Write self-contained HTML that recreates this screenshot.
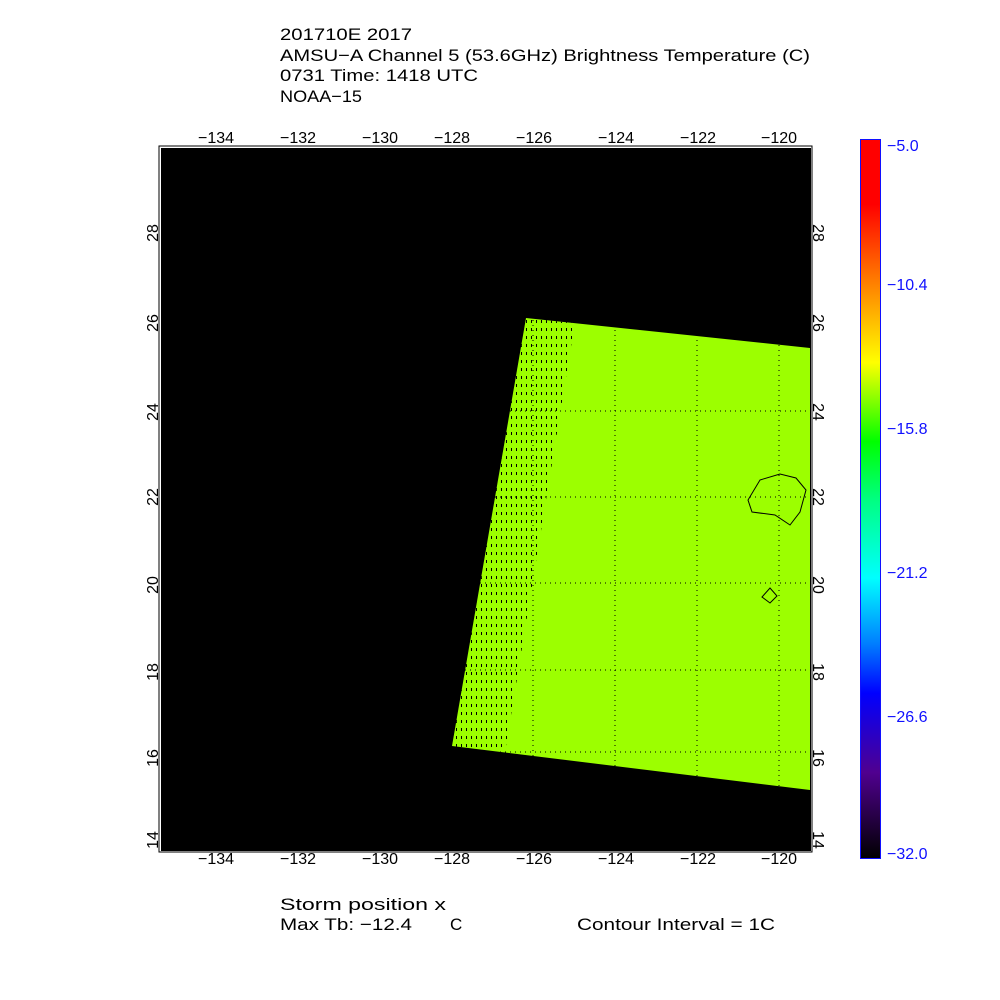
<!DOCTYPE html>
<html><head><style>body{margin:0;background:#fff}svg{display:block}</style></head>
<body>
<svg width="1000" height="1000" viewBox="0 0 1000 1000" font-family="Liberation Sans, sans-serif">
<defs>
<linearGradient id="cb" x1="0" y1="0" x2="0" y2="1">
<stop offset="0" stop-color="#ff0000"/>
<stop offset="0.09" stop-color="#ff0000"/>
<stop offset="0.20" stop-color="#ff8000"/>
<stop offset="0.31" stop-color="#ffff00"/>
<stop offset="0.42" stop-color="#00ff00"/>
<stop offset="0.50" stop-color="#00ff80"/>
<stop offset="0.61" stop-color="#00ffff"/>
<stop offset="0.70" stop-color="#0080ff"/>
<stop offset="0.77" stop-color="#0000ff"/>
<stop offset="0.88" stop-color="#500090"/>
<stop offset="1" stop-color="#000000"/>
</linearGradient>
<clipPath id="sw"><polygon points="526,318 810,348 810,790 452,746"/></clipPath>
<pattern id="hat" width="5" height="8" patternUnits="userSpaceOnUse"><rect x="1" y="0" width="1" height="3" fill="#000"/></pattern>
</defs>
<g font-size="17" fill="#000">
<text x="280" y="40" textLength="132" lengthAdjust="spacingAndGlyphs">201710E 2017</text>
<text x="280" y="61" textLength="530" lengthAdjust="spacingAndGlyphs">AMSU−A Channel 5 (53.6GHz) Brightness Temperature (C)</text>
<text x="280" y="81" textLength="198" lengthAdjust="spacingAndGlyphs">0731 Time: 1418 UTC</text>
<text x="280" y="102" textLength="82" lengthAdjust="spacingAndGlyphs">NOAA−15</text>
</g>
<rect x="159" y="146" width="653" height="706" fill="#fff" stroke="#000" stroke-width="1"/>
<rect x="161" y="148" width="650" height="703" fill="#000"/>
<polygon points="526,318 810,348 810,790 452,746" fill="#9cff00"/>
<g clip-path="url(#sw)">
<polygon points="526,318 575,322 505,752 452,746" fill="url(#hat)"/>
<g stroke="#000" stroke-width="1" stroke-dasharray="1,4">
<line x1="533" y1="300" x2="533" y2="800"/><line x1="615" y1="300" x2="615" y2="800"/>
<line x1="697" y1="300" x2="697" y2="800"/><line x1="779" y1="300" x2="779" y2="800"/>
<line x1="440" y1="411" x2="810" y2="411"/><line x1="440" y1="497" x2="810" y2="497"/>
<line x1="440" y1="583" x2="810" y2="583"/><line x1="440" y1="670" x2="810" y2="670"/>
<line x1="440" y1="752" x2="810" y2="752"/>
</g>
</g>
<path d="M760,480 L780,474 L796,478 L806,490 L800,512 L790,525 L775,515 L752,512 L748,500 Z" fill="none" stroke="#000"/>
<path d="M762,597 L770,588 L777,596 L770,603 Z" fill="none" stroke="#000"/>
<g font-size="16" fill="#000" text-anchor="middle">
<text x="216" y="143">−134</text><text x="298" y="143">−132</text><text x="380" y="143">−130</text>
<text x="452" y="143">−128</text><text x="534" y="143">−126</text><text x="616" y="143">−124</text>
<text x="698" y="143">−122</text><text x="779" y="143">−120</text>
<text x="216" y="864">−134</text><text x="298" y="864">−132</text><text x="380" y="864">−130</text>
<text x="452" y="864">−128</text><text x="534" y="864">−126</text><text x="616" y="864">−124</text>
<text x="698" y="864">−122</text><text x="779" y="864">−120</text>
</g>
<g font-size="16" fill="#000" text-anchor="middle">
<text transform="translate(158,233) rotate(-90)">28</text><text transform="translate(158,323) rotate(-90)">26</text>
<text transform="translate(158,412) rotate(-90)">24</text><text transform="translate(158,497) rotate(-90)">22</text>
<text transform="translate(158,585) rotate(-90)">20</text><text transform="translate(158,672) rotate(-90)">18</text>
<text transform="translate(158,758) rotate(-90)">16</text><text transform="translate(158,840) rotate(-90)">14</text>
<text transform="translate(813,233) rotate(90)">28</text><text transform="translate(813,323) rotate(90)">26</text>
<text transform="translate(813,412) rotate(90)">24</text><text transform="translate(813,497) rotate(90)">22</text>
<text transform="translate(813,585) rotate(90)">20</text><text transform="translate(813,672) rotate(90)">18</text>
<text transform="translate(813,758) rotate(90)">16</text><text transform="translate(813,840) rotate(90)">14</text>
</g>
<rect x="860.5" y="139.5" width="20" height="719" fill="url(#cb)" stroke="#1010ff" stroke-width="1"/>
<g font-size="16" fill="#1010ff">
<text x="887" y="151">−5.0</text><text x="887" y="290">−10.4</text><text x="887" y="434">−15.8</text>
<text x="887" y="578">−21.2</text><text x="887" y="722">−26.6</text><text x="887" y="859">−32.0</text>
</g>
<g font-size="17" fill="#000">
<text x="280" y="910" textLength="166" lengthAdjust="spacingAndGlyphs">Storm position x</text>
<text x="280" y="930" textLength="132" lengthAdjust="spacingAndGlyphs">Max Tb: −12.4</text>
<text x="450" y="930">C</text>
<text x="577" y="930" textLength="198" lengthAdjust="spacingAndGlyphs">Contour Interval = 1C</text>
</g>
</svg>
</body></html>
